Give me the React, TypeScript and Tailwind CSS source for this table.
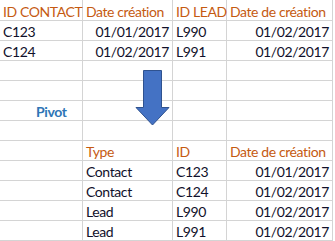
import React from "react";

type Cell = {
  t?: string;
  align?: "left" | "right";
  tone?: "head" | "body" | "pivot";
};

const H = (t: string, align: "left" | "right" = "left"): Cell => ({ t, align, tone: "head" });
const B = (t: string, align: "left" | "right" = "left"): Cell => ({ t, align, tone: "body" });
const E: Cell = {};

const rows: Cell[][] = [
  [H("ID CONTACT"), H("Date création"), H("ID LEAD"), H("Date de création")],
  [B("C123"), B("01/01/2017", "right"), B("L990"), B("01/02/2017", "right")],
  [B("C124"), B("01/02/2017", "right"), B("L991"), B("01/02/2017", "right")],
  [E, E, E, E],
  [E, E, E, E],
  [{ t: "Pivot", tone: "pivot" }, E, E, E],
  [E, E, E, E],
  [E, H("Type"), H("ID"), H("Date de création")],
  [E, B("Contact"), B("C123"), B("01/01/2017", "right")],
  [E, B("Contact"), B("C124"), B("01/02/2017", "right")],
  [E, B("Lead"), B("L990"), B("01/02/2017", "right")],
  [E, B("Lead"), B("L991"), B("01/02/2017", "right")],
];

const toneClass: Record<string, string> = {
  head: "text-[#c55a11]",
  body: "text-[#10102a]",
  pivot: "text-[#2e75b6] font-bold pl-[33px]",
};

function GridCell({ cell, first }: { cell: Cell; first: boolean }) {
  const justify = cell.align === "right" ? "justify-end pr-[3px]" : "justify-start pl-[3px]";
  return (
    <div
      className={`flex items-end overflow-visible whitespace-nowrap border-b border-r border-[#d4d4d4] pb-[1px] ${justify} ${
        first ? "h-[21px]" : "h-[20px]"
      }`}
    >
      {cell.t && (
        <span
          className={`text-[14px] leading-[15px] tracking-[-0.4px] ${toneClass[cell.tone ?? "body"]}`}
        >
          {cell.t}
        </span>
      )}
    </div>
  );
}

export default function App() {
  return (
    <div
      className="relative h-[241px] w-[335px] overflow-hidden bg-white"
      style={{ fontFamily: "Lato, 'Open Sans', sans-serif" }}
    >
      <div className="grid w-[333px] grid-cols-[83px_90px_54px_106px]">
        {rows.map((r, i) =>
          r.map((c, j) => <GridCell key={`${i}-${j}`} cell={c} first={i === 0} />)
        )}
      </div>
      {/* down arrow shape sitting over the sheet */}
      <svg
        className="absolute left-[135px] top-[70px]"
        width="35"
        height="56"
        viewBox="0 0 35 56"
      >
        <polygon
          points="8.5,0.5 26.5,0.5 26.5,37.5 34,37.5 17.5,55 1,37.5 8.5,37.5"
          fill="#4472c4"
          stroke="#2f528f"
          strokeWidth="1"
        />
      </svg>
    </div>
  );
}
